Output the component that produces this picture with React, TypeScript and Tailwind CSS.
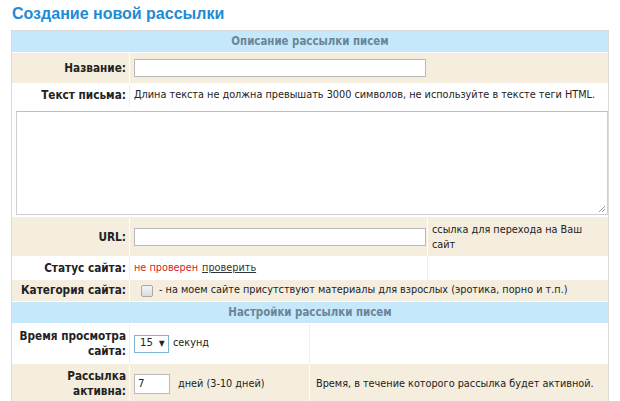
const font = { fontFamily: '"DejaVu Sans Condensed", "DejaVu Sans", Verdana, sans-serif', fontStretch: 'condensed' as const }

function Label({ children, className = '' }: { children: React.ReactNode; className?: string }) {
  return (
    <div className={`w-[118px] shrink-0 flex items-center justify-end pr-[3px] text-right font-bold text-[11.7px] leading-[15px] text-[#222] whitespace-nowrap border-r border-white ${className}`}>
      {children}
    </div>
  )
}

function Header({ title }: { title: string }) {
  return (
    <div className="h-[22px] bg-[#c6e8fb] flex items-center justify-center text-[11.4px] font-bold text-[#6b8597] border-b border-white">
      {title}
    </div>
  )
}

export default function App() {
  return (
    <div className="w-[620px] h-[401px] bg-white overflow-hidden text-[#222]" style={font}>
      <h1 className="pl-[12px] pt-[3px] h-[30px] text-[16px] font-bold text-[#1e8bd4] leading-[22px] font-['Liberation_Sans',Arial,sans-serif]">
        Создание новой рассылки
      </h1>

      <div className="ml-[11px] w-[598px] border-x border-t border-[#dcdcdc]">
        <Header title="Описание рассылки писем" />

        {/* Название */}
        <div className="flex h-[31px] bg-[#f5eedf] border-b border-white">
          <Label>Название:</Label>
          <div className="flex items-center pl-[4px]">
            <div className="w-[292px] h-[18px] bg-white border border-[#b9b9b9]" />
          </div>
        </div>

        {/* Текст письма */}
        <div className="flex h-[23px] bg-white">
          <Label className="border-r-[#eeeeee]">Текст письма:</Label>
          <div className="flex items-center pl-[4px] text-[10.8px] whitespace-nowrap">
            Длина текста не должна превышать 3000 символов, не используйте в тексте теги HTML.
          </div>
        </div>
        <div className="h-[111px] bg-white pt-[4px] pl-[4px] border-b border-[#f3efe6]">
          <div className="relative w-[592px] h-[104px] border border-[#cfcfcf] border-t-[#bdbdbd]">
            <svg className="absolute right-[1px] bottom-[1px]" width="9" height="9" viewBox="0 0 9 9">
              <path d="M8 2 L2 8 M8 5 L5 8" stroke="#9a9a9a" strokeWidth="1" />
            </svg>
          </div>
        </div>

        {/* URL */}
        <div className="flex h-[39px] bg-[#f5eedf] border-b border-white">
          <Label>URL:</Label>
          <div className="w-[298px] shrink-0 flex items-center pl-[4px] border-r border-white">
            <div className="w-[292px] h-[18px] bg-white border border-[#b9b9b9]" />
          </div>
          <div className="flex items-center pl-[4px] text-[10.8px] leading-[15px] w-[170px]">
            ссылка для перехода на Ваш сайт
          </div>
        </div>

        {/* Статус */}
        <div className="flex h-[23px] bg-white border-b border-white">
          <Label className="border-r-[#eeeeee]">Статус сайта:</Label>
          <div className="w-[298px] shrink-0 flex items-center pl-[4px] text-[10.8px] border-r border-[#eeeeee]">
            <span className="text-[#d21f1f]">не проверен</span>
            <span className="ml-[4px] underline text-[#333]">проверить</span>
          </div>
        </div>

        {/* Категория */}
        <div className="flex h-[22px] bg-[#f5eedf] border-b border-white">
          <Label>Категория сайта:</Label>
          <div className="flex items-center pl-[11px] text-[10.8px] whitespace-nowrap">
            <span className="w-[12px] h-[12px] border border-[#a8a8a8] rounded-[2px] bg-gradient-to-b from-[#f4f4f4] to-[#dcdcdc] mr-[6px]" />
            - на моем сайте присутствуют материалы для взрослых (эротика, порно и т.п.)
          </div>
        </div>

        <Header title="Настройки рассылки писем" />

        {/* Время просмотра */}
        <div className="flex h-[40px] bg-white border-b border-white">
          <Label className="border-r-[#eeeeee]">
            <span>Время просмотра<br />сайта:</span>
          </Label>
          <div className="w-[180px] shrink-0 flex items-center pl-[4px] text-[10.8px] border-r border-[#eeeeee]">
            <div className="w-[35px] h-[18px] border border-[#7eb4d6] flex items-center pl-[5px] text-[11.3px]">
              15 <span className="ml-[6px] text-[8px]">▼</span>
            </div>
            <span className="ml-[4px]">секунд</span>
          </div>
        </div>

        {/* Рассылка активна */}
        <div className="flex h-[40px] bg-[#f5eedf]">
          <Label>
            <span>Рассылка<br />активна:</span>
          </Label>
          <div className="w-[180px] shrink-0 flex items-center pl-[4px] text-[10.8px] border-r border-white">
            <div className="w-[36px] h-[20px] bg-white border border-[#b9b9b9] flex items-center pl-[3px] text-[11.3px]">7</div>
            <span className="ml-[8px]">дней (3-10 дней)</span>
          </div>
          <div className="flex items-center pl-[6px] text-[10.8px] whitespace-nowrap">
            Время, в течение которого рассылка будет активной.
          </div>
        </div>
      </div>
    </div>
  )
}
